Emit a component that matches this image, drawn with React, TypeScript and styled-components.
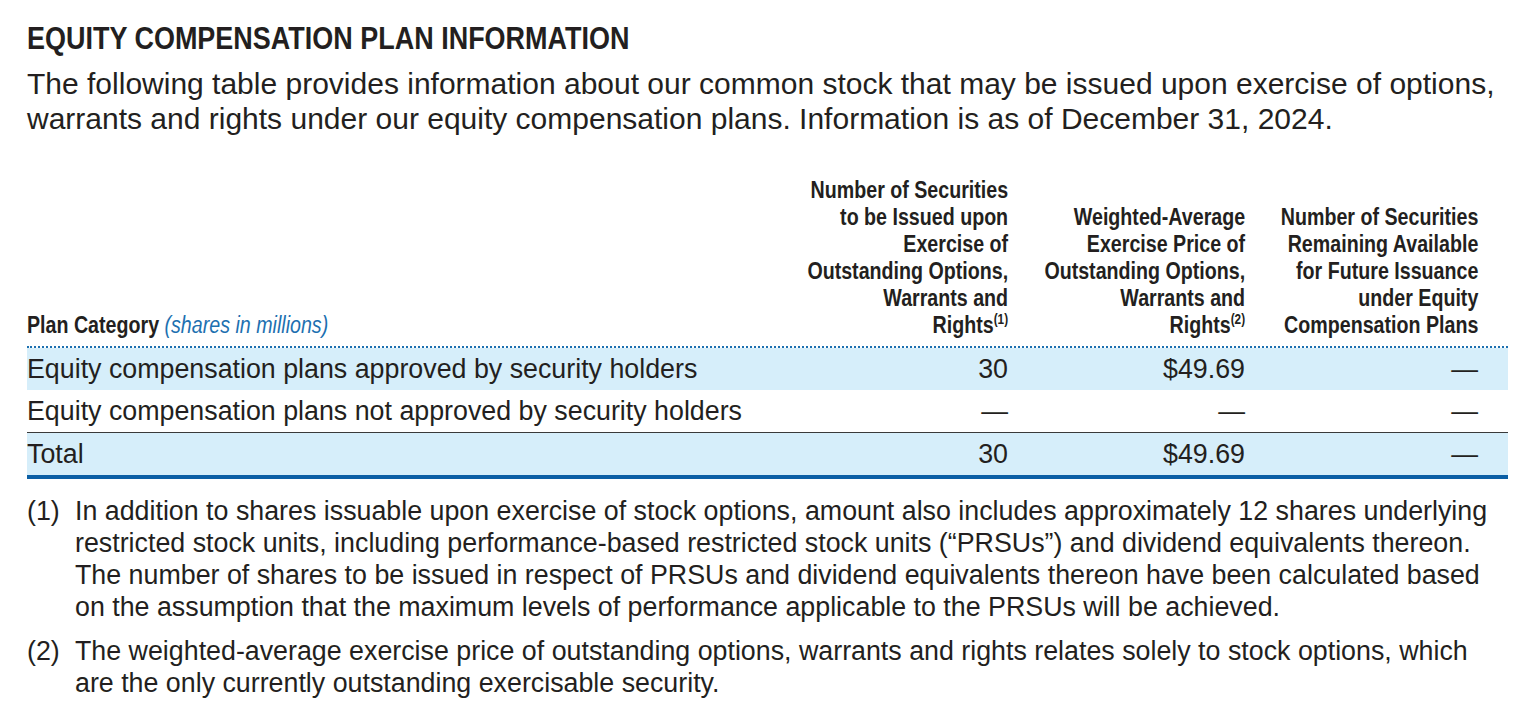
import React from "react";
import styled, { createGlobalStyle } from "styled-components";

const GlobalStyle = createGlobalStyle`
  html, body {
    margin: 0;
    padding: 0;
    background: #ffffff;
  }
  body {
    font-family: "Liberation Sans", Arial, sans-serif;
    color: #231f20;
  }
`;

// no condensed face is installed, so the condensed headings are squeezed
const CONDENSE = 0.843;

const Page = styled.div`
  padding: 20px 22px 0 27px;
  width: 1481px;
`;

const Title = styled.h2`
  margin: 0;
  font-weight: bold;
  font-size: 32px;
  line-height: 36px;
  white-space: nowrap;
  transform: scaleX(${CONDENSE});
  transform-origin: left center;
`;

const Intro = styled.p`
  margin: 10px 0 0;
  font-size: 30px;
  line-height: 35px;
`;

const Table = styled.div`
  margin-top: 41px;
`;

const Row = styled.div<{ $shaded?: boolean; $rule?: "dotted" | "thin" | "thick" }>`
  display: grid;
  grid-template-columns: 1fr 237px 237px 233px;
  padding-right: 30px;
  background: ${({ $shaded }) => ($shaded ? "#d6eefa" : "transparent")};
  border-bottom: ${({ $rule }) =>
    $rule === "dotted"
      ? "2px dotted #1d70b0"
      : $rule === "thin"
      ? "1.5px solid #3a3a3a"
      : $rule === "thick"
      ? "4px solid #0b5fa5"
      : "none"};
`;

const HeadRow = styled(Row)`
  padding-bottom: 7px;
`;

const HeadCell = styled.div<{ $left?: boolean }>`
  display: flex;
  align-items: flex-end;
  justify-content: ${({ $left }) => ($left ? "flex-start" : "flex-end")};
`;

const HeadText = styled.div<{ $left?: boolean }>`
  flex-shrink: 0;
  white-space: nowrap;
  font-weight: bold;
  font-size: 23.3px;
  line-height: 27px;
  text-align: ${({ $left }) => ($left ? "left" : "right")};
  transform: scaleX(${CONDENSE});
  transform-origin: ${({ $left }) => ($left ? "left" : "right")} bottom;
  sup {
    font-size: 14px;
    line-height: 0;
    vertical-align: 9px;
  }
`;

const Unit = styled.span`
  font-weight: normal;
  font-style: italic;
  color: #1d70b0;
`;

const Cell = styled.div<{ $left?: boolean }>`
  font-size: 26.8px;
  line-height: 42px;
  height: 42px;
  white-space: nowrap;
  text-align: ${({ $left }) => ($left ? "left" : "right")};
`;

const Notes = styled.div`
  margin-top: 16px;
  display: flex;
  flex-direction: column;
  gap: 12px;
`;

const Note = styled.div`
  display: grid;
  grid-template-columns: 48px 1fr;
  font-size: 26.8px;
  line-height: 32px;
`;

const headers = [
  [
    "Number of Securities",
    "to be Issued upon",
    "Exercise of",
    "Outstanding Options,",
    "Warrants and",
    "Rights|1",
  ],
  [
    "Weighted-Average",
    "Exercise Price of",
    "Outstanding Options,",
    "Warrants and",
    "Rights|2",
  ],
  [
    "Number of Securities",
    "Remaining Available",
    "for Future Issuance",
    "under Equity",
    "Compensation Plans",
  ],
];

const rows = [
  {
    label: "Equity compensation plans approved by security holders",
    values: ["30", "$49.69", "—"],
    shaded: true,
  },
  {
    label: "Equity compensation plans not approved by security holders",
    values: ["—", "—", "—"],
    shaded: false,
    rule: "thin" as const,
  },
  {
    label: "Total",
    values: ["30", "$49.69", "—"],
    shaded: true,
    rule: "thick" as const,
  },
];

export default function App() {
  return (
    <>
      <GlobalStyle />
      <Page>
        <Title>EQUITY COMPENSATION PLAN INFORMATION</Title>
        <Intro>
          The following table provides information about our common stock that
          may be issued upon exercise of options, warrants and rights under our
          equity compensation plans. Information is as of December 31, 2024.
        </Intro>
        <Table>
          <HeadRow $rule="dotted">
            <HeadCell $left>
              <HeadText $left>
                Plan Category <Unit>(shares in millions)</Unit>
              </HeadText>
            </HeadCell>
            {headers.map((lines, i) => (
              <HeadCell key={i}>
                <HeadText>
                  {lines.map((line, j) => {
                    const [text, note] = line.split("|");
                    return (
                      <div key={j}>
                        {text}
                        {note && <sup>({note})</sup>}
                      </div>
                    );
                  })}
                </HeadText>
              </HeadCell>
            ))}
          </HeadRow>
          {rows.map((r) => (
            <Row key={r.label} $shaded={r.shaded} $rule={r.rule}>
              <Cell $left>{r.label}</Cell>
              {r.values.map((v, i) => (
                <Cell key={i}>{v}</Cell>
              ))}
            </Row>
          ))}
        </Table>
        <Notes>
          <Note>
            <span>(1)</span>
            <span>
              In addition to shares issuable upon exercise of stock options,
              amount also includes approximately 12 shares underlying restricted
              stock units, including performance-based restricted stock units
              (“PRSUs”) and dividend equivalents thereon. The number of shares to
              be issued in respect of PRSUs and dividend equivalents thereon have
              been calculated based on the assumption that the maximum levels of
              performance applicable to the PRSUs will be achieved.
            </span>
          </Note>
          <Note>
            <span>(2)</span>
            <span>
              The weighted-average exercise price of outstanding options,
              warrants and rights relates solely to stock options, which are the
              only currently outstanding exercisable security.
            </span>
          </Note>
        </Notes>
      </Page>
    </>
  );
}
